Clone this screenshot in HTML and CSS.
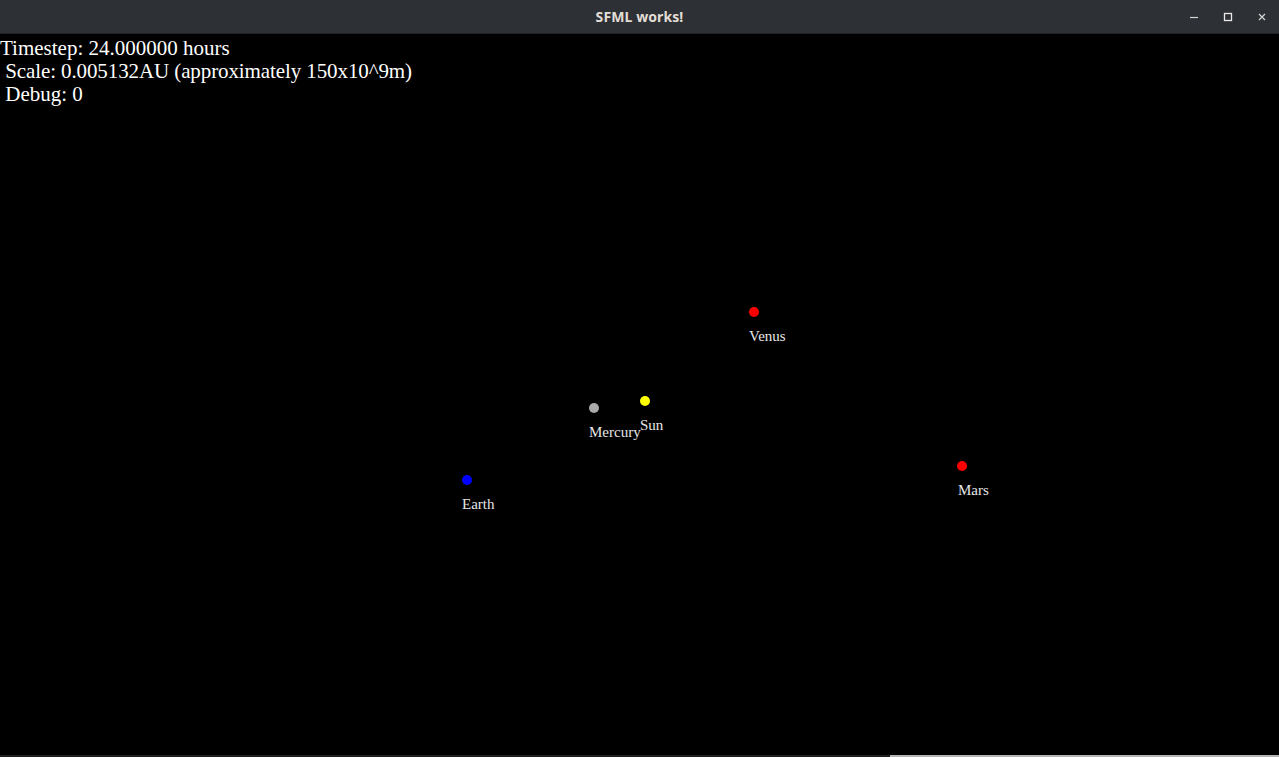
FILE: index.html
```html
<!DOCTYPE html>
<html>
<head>
<meta charset="utf-8">
<link rel="stylesheet" href="styles.css">
</head>
<body>
<div class="window">
  <header class="titlebar">
    <div class="title">SFML works!</div>
    <div class="controls">
      <svg class="ctl" width="12" height="12" viewBox="0 0 12 12"><path d="M2 6.5h8" stroke="#d6d6d6" stroke-width="1.2"/></svg>
      <svg class="ctl" width="12" height="12" viewBox="0 0 12 12"><rect x="2.5" y="2.5" width="7" height="7" fill="none" stroke="#e8e8e8" stroke-width="1.3"/></svg>
      <svg class="ctl" width="12" height="12" viewBox="0 0 12 12"><path d="M3 3l6 6M9 3l-6 6" stroke="#d6d6d6" stroke-width="1.2"/></svg>
    </div>
  </header>
  <main class="canvas">
    <div class="hud">
      <div class="line">Timestep: 24.000000 hours</div>
      <div class="line tight">&nbsp;Scale: 0.005132AU (approximately 150x10^9m)</div>
      <div class="line">&nbsp;Debug: 0</div>
    </div>
    <div class="body" style="left:749px;top:273px"><span class="dot red"></span><span class="label">Venus</span></div>
    <div class="body" style="left:589px;top:369px"><span class="dot grey"></span><span class="label">Mercury</span></div>
    <div class="body" style="left:640px;top:362px"><span class="dot yellow"></span><span class="label">Sun</span></div>
    <div class="body" style="left:462px;top:441px"><span class="dot blue"></span><span class="label">Earth</span></div>
    <div class="body" style="left:957px;top:427px"><span class="dot red"></span><span class="label mars">Mars</span></div>
  </main>
  <footer class="bottom">
    <div class="b-left"></div>
    <div class="b-right"></div>
  </footer>
</div>
</body>
</html>
```
FILE: styles.css
```css
html, body {
  margin: 0;
  padding: 0;
  background: #000;
  overflow: hidden;
}
.window {
  width: 1279px;
  height: 757px;
  display: flex;
  flex-direction: column;
}
.titlebar {
  height: 34px;
  flex: 0 0 34px;
  background: #2d3034;
  border-bottom: 1px solid #1f2124;
  box-sizing: border-box;
  position: relative;
  display: flex;
  align-items: center;
  justify-content: center;
}
.title {
  font-family: "Noto Sans", "DejaVu Sans", sans-serif;
  font-weight: 700;
  font-size: 14px;
  color: #e2ded6;
  letter-spacing: 0.1px;
}
.controls {
  position: absolute;
  right: 11px;
  top: 11px;
  display: flex;
  gap: 22px;
}
.ctl { display: block; }
.canvas {
  flex: 1;
  position: relative;
  background: #000;
  font-family: "Liberation Serif", "Times New Roman", serif;
  color: #fff;
}
.hud {
  padding-left: 0;
  padding-top: 3px;
}
.line {
  font-size: 21px;
  line-height: 23px;
  white-space: pre;
}
.tight { letter-spacing: -0.1px; }
.body {
  position: absolute;
  display: flex;
  flex-direction: column;
  align-items: flex-start;
}
.dot {
  width: 10px;
  height: 10px;
  border-radius: 50%;
  display: block;
}
.red { background: #ff0000; }
.grey { background: #a9a9a9; }
.yellow { background: #ffff00; }
.blue { background: #0000ff; }
.label {
  margin-top: 12px;
  font-size: 15px;
  line-height: 15px;
  color: #e6e6e6;
}
.mars { margin-left: 1px; }
.bottom {
  flex: 0 0 2px;
  display: flex;
}
.b-left { width: 890px; background: #1e1e1e; }
.b-right { flex: 1; background: #b4b4b4; }
```
